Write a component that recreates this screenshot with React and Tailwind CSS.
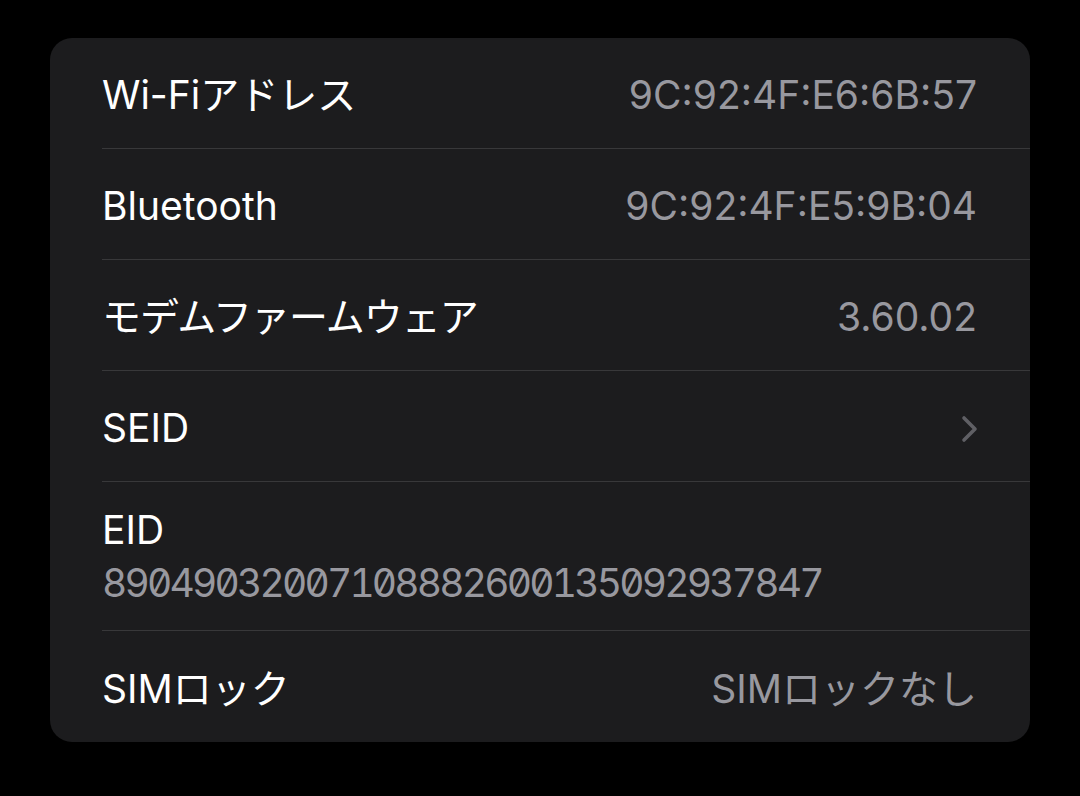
const rows = [
  { label: "Wi-Fiアドレス", value: "9C:92:4F:E6:6B:57" },
  { label: "Bluetooth", value: "9C:92:4F:E5:9B:04" },
  { label: "モデムファームウェア", value: "3.60.02", tight: true },
  { label: "SEID", chevron: true },
  { label: "EID", sub: "89049032007108882600135092937847" },
  { label: "SIMロック", value: "SIMロックなし" },
]

function Chevron() {
  return (
    <svg width="17" height="28" viewBox="0 0 17 28" fill="none" className="-mr-[1px]">
      <path d="M3 3 L14 14 L3 25" stroke="#5f5f64" strokeWidth="3.6" strokeLinecap="round" strokeLinejoin="round" />
    </svg>
  )
}

function Row({ row, last }) {
  if (row.sub) {
    return (
      <div className="pl-[52px]">
        <div className={`h-[149px] flex flex-col justify-center pt-[3px] pr-[53px] ${last ? "" : "border-b border-[#38383a]"}`}>
          <span className="text-white leading-[50px]">{row.label}</span>
          <span className="text-[#98989f] leading-[56px] tracking-[-2.8px] [font-feature-settings:'zero','tnum']">
            {row.sub}
          </span>
        </div>
      </div>
    )
  }

  return (
    <div className="pl-[52px]">
      <div
        className={`h-[111px] flex items-center justify-between pt-[5px] pr-[53px] ${last ? "" : "border-b border-[#38383a]"}`}
      >
        <span className={row.tight ? "text-white tracking-[-1px]" : "text-white"}>{row.label}</span>
        {row.value && <span className="text-[#98989f]">{row.value}</span>}
        {row.chevron && <Chevron />}
      </div>
    </div>
  )
}

export default function App() {
  return (
    <div
      className="min-h-[796px] w-[1080px] bg-black pt-[38px] px-[50px] text-[39px]"
      style={{ fontFamily: '"Inter", "Noto Sans CJK JP", sans-serif' }}
    >
      <div className="bg-[#1c1c1e] rounded-[22px] overflow-hidden">
        {rows.map((row, i) => (
          <Row key={row.label} row={row} last={i === rows.length - 1} />
        ))}
      </div>
    </div>
  )
}
